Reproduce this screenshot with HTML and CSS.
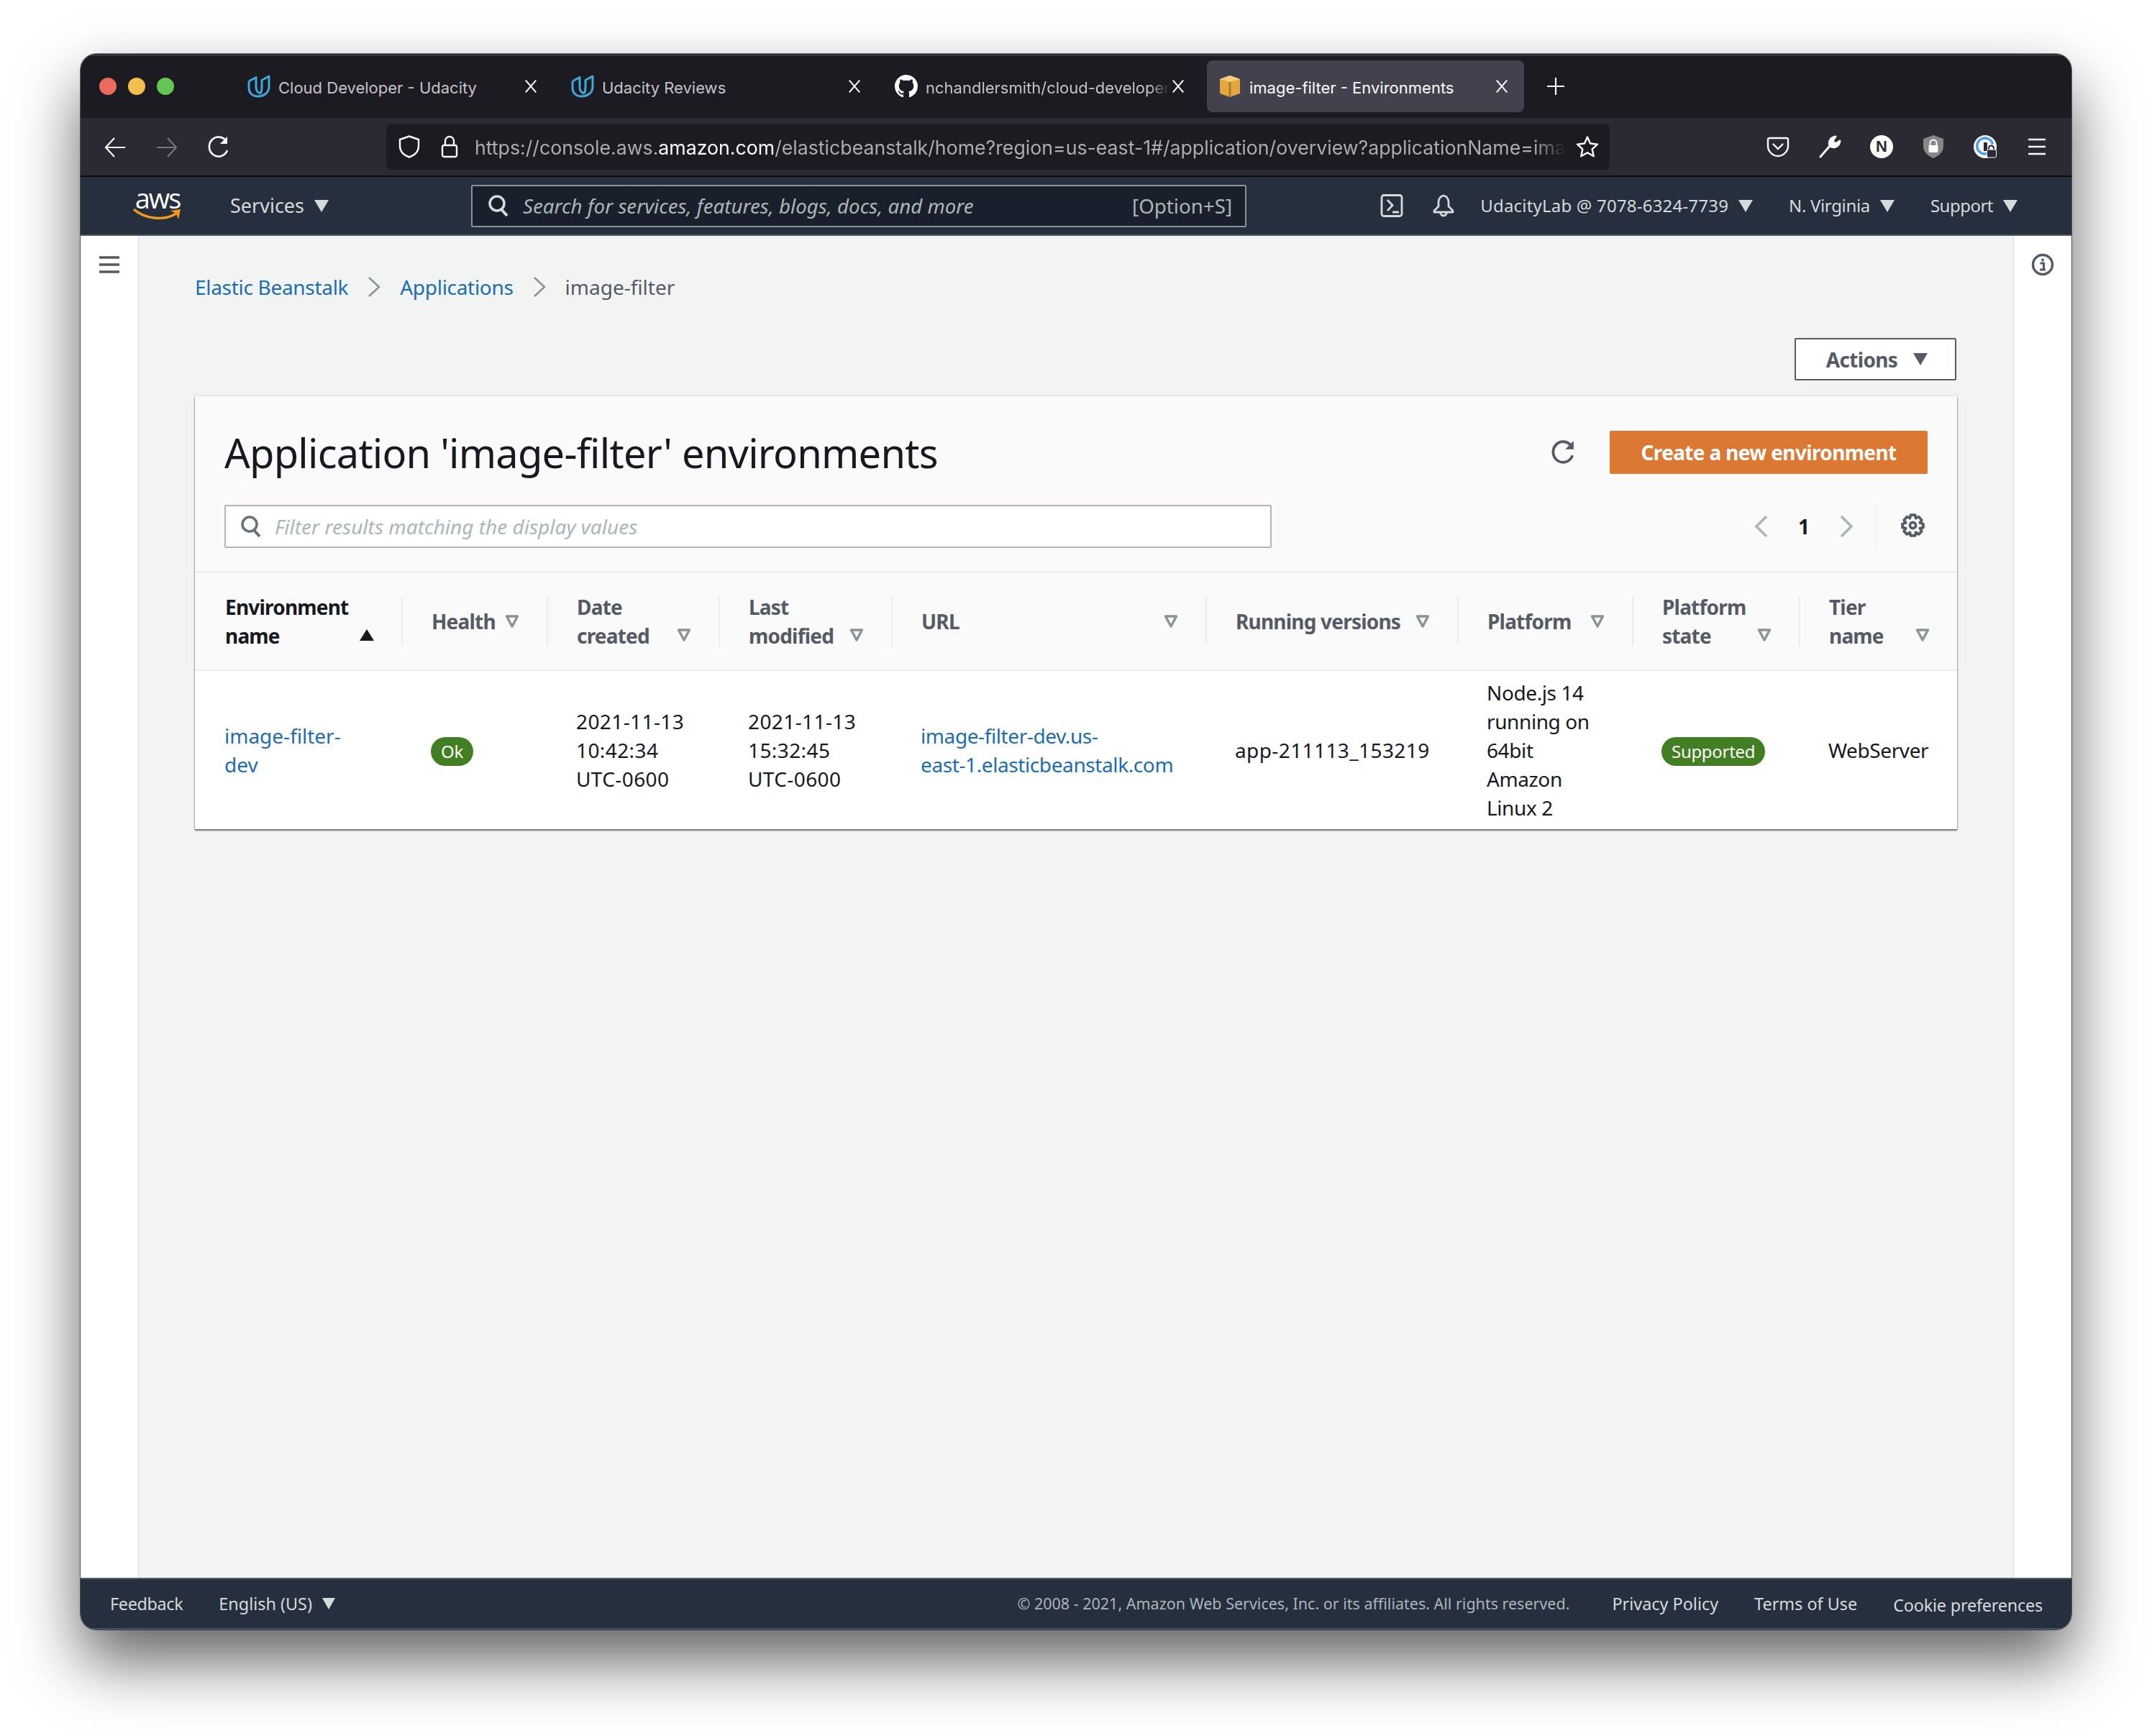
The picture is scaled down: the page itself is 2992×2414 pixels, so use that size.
FILE: index.html
```html
<!DOCTYPE html>
<html lang="en">
<head>
    <meta charset="UTF-8">
    <title>image-filter - Environments</title>
    <link rel="stylesheet" href="styles.css">
</head>
<body>

<svg class="defs" width="0" height="0">
    <symbol id="udacity" viewBox="0 0 32 32">
        <path d="M2 9 L12 3.5 V18 C12 23 15 25 18.5 26 M2 9 V18 C2 26 8 30 14 30 C22 30 30 26 30 16 V2 L20 7.5 V17 C20 21 19.5 23.5 18.5 26" fill="none" stroke="#3fa9dc" stroke-width="3" stroke-linejoin="round"/>
    </symbol>
    <symbol id="close" viewBox="0 0 20 20">
        <path d="M4 3 L16 17 M16 3 L4 17" fill="none" stroke="currentColor" stroke-width="1.7"/>
    </symbol>
    <symbol id="filter-arrow" viewBox="0 0 20 18">
        <path d="M2.5 2 H17.5 L10 16 Z" fill="none" stroke="#879596" stroke-width="3.4" stroke-linejoin="round"/>
    </symbol>
    <symbol id="search" viewBox="0 0 30 32">
        <circle cx="13" cy="13" r="10" fill="none" stroke="currentColor" stroke-width="3.5"/>
        <path d="M19 21 L27 30" fill="none" stroke="currentColor" stroke-width="4"/>
    </symbol>
</svg>

<div class="window">

    <div class="tabbar">
        <div class="traffic">
            <span class="dot dot-red"></span>
            <span class="dot dot-yellow"></span>
            <span class="dot dot-green"></span>
        </div>
        <div class="tab">
            <svg class="favicon"><use href="#udacity"/></svg>
            <span class="tab-title">Cloud Developer - Udacity</span>
            <svg class="tab-close"><use href="#close"/></svg>
        </div>
        <div class="tab">
            <svg class="favicon"><use href="#udacity"/></svg>
            <span class="tab-title">Udacity Reviews</span>
            <svg class="tab-close"><use href="#close"/></svg>
        </div>
        <div class="tab">
            <svg class="favicon" viewBox="0 0 16 16">
                <path fill="#fbfbfe" d="M8 0C3.58 0 0 3.58 0 8c0 3.54 2.29 6.53 5.47 7.59.4.07.55-.17.55-.38 0-.19-.01-.82-.01-1.49-2.01.37-2.53-.49-2.69-.94-.09-.23-.48-.94-.82-1.13-.28-.15-.68-.52-.01-.53.63-.01 1.08.58 1.23.82.72 1.21 1.87.87 2.33.66.07-.52.28-.87.51-1.07-1.78-.2-3.64-.89-3.64-3.95 0-.87.31-1.59.82-2.15-.08-.2-.36-1.02.08-2.12 0 0 .67-.21 2.2.82.64-.18 1.32-.27 2-.27s1.36.09 2 .27c1.53-1.04 2.2-.82 2.2-.82.44 1.1.16 1.92.08 2.12.51.56.82 1.27.82 2.15 0 3.07-1.87 3.75-3.65 3.95.29.25.54.73.54 1.48 0 1.07-.01 1.93-.01 2.2 0 .21.15.46.55.38A8.01 8.01 0 0 0 16 8c0-4.42-3.58-8-8-8z"/>
            </svg>
            <span class="tab-title tab-title-fade">nchandlersmith/cloud-developer</span>
            <svg class="tab-close"><use href="#close"/></svg>
        </div>
        <div class="tab tab-active">
            <svg class="favicon" viewBox="0 0 32 32">
                <path fill="#e3a73f" d="M2 6 L16 1 L30 6 V26 L16 31 L2 26 Z"/>
                <path fill="#f4cf83" d="M2 6 L16 1 L30 6 L16 10 Z"/>
                <path fill="#a97b28" d="M14.5 10 H17.5 V31 H14.5 Z"/>
            </svg>
            <span class="tab-title">image-filter - Environments</span>
            <svg class="tab-close"><use href="#close"/></svg>
        </div>
        <svg class="new-tab" viewBox="0 0 26 26"><path d="M13 1 V25 M1 13 H25" fill="none" stroke="#fbfbfe" stroke-width="2.2"/></svg>
    </div>

    <div class="toolbar">
        <div class="tool tool-nav">
            <svg class="tool-icon" viewBox="0 0 32 32"><path d="M30 16 H3 M15 3 L3 16 L15 29" fill="none" stroke="#fbfbfe" stroke-width="2.2"/></svg>
        </div>
        <div class="tool tool-nav">
            <svg class="tool-icon" viewBox="0 0 32 32"><path d="M2 16 H29 M17 3 L29 16 L17 29" fill="none" stroke="#77767d" stroke-width="2.2"/></svg>
        </div>
        <div class="tool tool-nav">
            <svg class="tool-icon" viewBox="0 0 32 32"><path d="M27 8 A13 13.5 0 1 0 28 20" fill="none" stroke="#fbfbfe" stroke-width="2.6"/><path d="M28 1 V11 H18 Z" fill="#fbfbfe"/></svg>
        </div>
        <div class="urlbar">
            <svg class="url-shield" viewBox="0 0 30 32"><path d="M15 1.5 L28 6 V15 C28 23 22 28 15 30.5 C8 28 2 23 2 15 V6 Z" fill="none" stroke="#fbfbfe" stroke-width="2.4" stroke-linejoin="round"/></svg>
            <svg class="url-lock" viewBox="0 0 24 32"><path d="M6 14 V8 A6 6 0 0 1 18 8 V14" fill="none" stroke="#fbfbfe" stroke-width="2.4"/><rect x="2" y="14" width="20" height="16" rx="2.5" fill="none" stroke="#fbfbfe" stroke-width="2.4"/></svg>
            <span class="url-text">https://console.aws.<b>amazon.com</b>/elasticbeanstalk/home?region=us-east-1#/application/overview?applicationName=ima</span>
            <svg class="url-star" viewBox="0 0 32 32"><path d="M16 2.5 L20 11.5 L30 12.7 L22.7 19.4 L24.7 29.3 L16 24.3 L7.3 29.3 L9.3 19.4 L2 12.7 L12 11.5 Z" fill="none" stroke="#fbfbfe" stroke-width="2.4" stroke-linejoin="round"/></svg>
        </div>
        <div class="tool-group">
            <div class="tool">
                <svg class="tool-icon" viewBox="0 0 32 32"><path d="M4 4 H28 A2 2 0 0 1 30 6 V15 C30 23 23 29 16 29 C9 29 2 23 2 15 V6 A2 2 0 0 1 4 4 Z" fill="none" stroke="#fbfbfe" stroke-width="2.4"/><path d="M9.5 12.5 L16 19 L22.5 12.5" fill="none" stroke="#fbfbfe" stroke-width="2.4" stroke-linecap="round"/></svg>
            </div>
            <div class="tool">
                <svg class="tool-icon" viewBox="0 0 32 32"><path d="M3 30 L16 15 M16 15 C14 9 17 3 24 2 L20 8 L24 12 L30 8 C29 15 23 19 16 15" fill="#fbfbfe" stroke="#fbfbfe" stroke-width="3" stroke-linecap="round" stroke-linejoin="round"/></svg>
            </div>
            <div class="tool">
                <span class="ext-n">N</span>
            </div>
            <div class="tool">
                <svg class="tool-icon" viewBox="0 0 30 32"><path d="M15 0 L29 5 V15 C29 24 22 29 15 32 C8 29 1 24 1 15 V5 Z" fill="#87878a"/><path d="M10.5 14 V11 A4.5 4.5 0 0 1 19.5 11 V14" fill="none" stroke="#fbfbfe" stroke-width="2"/><rect x="8.5" y="14" width="13" height="10" rx="1" fill="#fbfbfe"/></svg>
            </div>
            <div class="tool">
                <svg class="tool-icon" viewBox="0 0 32 32"><circle cx="16" cy="16" r="16" fill="#fbfbfe"/><path d="M25 21 A11 11 0 1 1 26.5 12.5" fill="none" stroke="#4c9cf0" stroke-width="3.5"/><rect x="14" y="10" width="5" height="12" fill="#2b2a33"/><path d="M21 21 V18 A3.5 3.5 0 0 1 28 18 V21" fill="none" stroke="#2b2a33" stroke-width="2"/><rect x="18.5" y="20" width="13" height="11" rx="2" fill="#2b2a33" stroke="#fbfbfe"/></svg>
            </div>
            <div class="tool">
                <svg class="tool-icon" viewBox="0 0 32 32"><path d="M4 6 H28 M4 16 H28 M4 26 H28" fill="none" stroke="#fbfbfe" stroke-width="2.4"/></svg>
            </div>
        </div>
    </div>

    <div class="awsnav">
        <div class="aws-logo">
            <span class="aws-word">aws</span>
            <svg class="aws-smile" viewBox="0 0 68 18"><path d="M1 2 C16 15 42 19 60 8" fill="none" stroke="#f29a1e" stroke-width="3.4"/><path d="M52 4 L66 2 L63 16 L60 8 Z" fill="#f29a1e"/></svg>
        </div>
        <span class="nav-item nav-services">Services<i class="caret"></i></span>
        <div class="nav-search">
            <svg class="nav-search-icon"><use href="#search"/></svg>
            <span class="nav-search-text">Search for services, features, blogs, docs, and more</span>
            <span class="nav-search-key">[Option+S]</span>
        </div>
        <svg class="nav-terminal" viewBox="0 0 32 32"><rect x="2" y="1.5" width="28" height="29" rx="3" fill="none" stroke="#d5dbdb" stroke-width="2.8"/><path d="M10 8 L17 15.5 L10 23 M17 25 H26" fill="none" stroke="#d5dbdb" stroke-width="2.8"/></svg>
        <svg class="nav-bell" viewBox="0 0 32 32"><path d="M16 2 C11 3 9 7 9 12 V17 L3 23 V25 H29 V23 L23 17 V12 C23 7 21 3 16 2 Z" fill="none" stroke="#d5dbdb" stroke-width="2.8" stroke-linejoin="round"/><path d="M11.5 25 A4.5 5 0 0 0 20.5 25" fill="none" stroke="#d5dbdb" stroke-width="2.8"/></svg>
        <span class="nav-item nav-account">UdacityLab @ 7078-6324-7739<i class="caret"></i></span>
        <span class="nav-item nav-region">N. Virginia<i class="caret"></i></span>
        <span class="nav-item nav-support">Support<i class="caret"></i></span>
    </div>

    <div class="main">
        <div class="rail rail-left">
            <svg class="rail-icon" viewBox="0 0 32 32"><path d="M2 6 H30 M2 16 H30 M2 26 H30" fill="none" stroke="#545b64" stroke-width="3.6"/></svg>
        </div>

        <div class="content">
            <div class="breadcrumb">
                <a href="#">Elastic Beanstalk</a>
                <svg class="crumb-sep" viewBox="0 0 18 30"><path d="M2 2 L16 15 L2 28" fill="none" stroke="#879596" stroke-width="2.6"/></svg>
                <a href="#">Applications</a>
                <svg class="crumb-sep" viewBox="0 0 18 30"><path d="M2 2 L16 15 L2 28" fill="none" stroke="#879596" stroke-width="2.6"/></svg>
                <span class="crumb-current">image-filter</span>
            </div>

            <div class="page-actions">
                <button class="btn-actions">Actions<i class="caret caret-dark"></i></button>
            </div>

            <div class="card">
                <div class="card-head">
                    <div class="title-row">
                        <h1>Application 'image-filter' environments</h1>
                        <svg class="refresh" viewBox="0 0 32 32"><path d="M27 8 A13 13.5 0 1 0 28.5 20" fill="none" stroke="#545b64" stroke-width="3.6"/><path d="M30 1 V12 H19 Z" fill="#545b64"/></svg>
                        <button class="btn-primary">Create a new environment</button>
                    </div>
                    <div class="filter-row">
                        <div class="filter-input">
                            <svg class="filter-icon"><use href="#search"/></svg>
                            <span>Filter results matching the display values</span>
                        </div>
                        <div class="pager">
                            <svg class="pager-arrow" viewBox="0 0 20 32"><path d="M17 2 L3 16 L17 30" fill="none" stroke="#aab7b8" stroke-width="3.6"/></svg>
                            <span class="pager-num">1</span>
                            <svg class="pager-arrow" viewBox="0 0 20 32"><path d="M3 2 L17 16 L3 30" fill="none" stroke="#aab7b8" stroke-width="3.6"/></svg>
                        </div>
                        <div class="prefs">
                            <svg class="gear" viewBox="0 0 32 32"><circle cx="16" cy="16" r="4" fill="none" stroke="#545b64" stroke-width="3.4"/><path d="M13 2 H19 L20 6.5 L24 4.5 L28 9 L25.5 12.5 L30 14 V19 L25.5 20 L28 24 L24 28 L20 25.5 L19 30 H13 L12 25.5 L8 28 L4 24 L6.5 20 L2 19 V14 L6.5 12.5 L4 9 L8 4.5 L12 6.5 Z" fill="none" stroke="#545b64" stroke-width="3.6" stroke-linejoin="round"/></svg>
                        </div>
                    </div>
                </div>

                <table class="env-table">
                    <colgroup>
                        <col class="col-name"><col class="col-health"><col class="col-created"><col class="col-modified"><col class="col-url"><col class="col-version"><col class="col-platform"><col class="col-state"><col class="col-tier">
                    </colgroup>
                    <thead>
                        <tr>
                            <th class="first sorted"><div class="th-inner"><span>Environment<br>name</span><svg class="sort-up" viewBox="0 0 20 18"><path d="M10 1 L20 17 H0 Z" fill="#16191f"/></svg></div></th>
                            <th><div class="th-inner one-line"><span>Health</span><svg class="sort-icon"><use href="#filter-arrow"/></svg></div></th>
                            <th><div class="th-inner"><span>Date<br>created</span><svg class="sort-icon"><use href="#filter-arrow"/></svg></div></th>
                            <th><div class="th-inner"><span>Last<br>modified</span><svg class="sort-icon"><use href="#filter-arrow"/></svg></div></th>
                            <th><div class="th-inner one-line"><span>URL</span><svg class="sort-icon"><use href="#filter-arrow"/></svg></div></th>
                            <th><div class="th-inner one-line"><span>Running versions</span><svg class="sort-icon"><use href="#filter-arrow"/></svg></div></th>
                            <th><div class="th-inner one-line"><span>Platform</span><svg class="sort-icon"><use href="#filter-arrow"/></svg></div></th>
                            <th><div class="th-inner"><span>Platform<br>state</span><svg class="sort-icon"><use href="#filter-arrow"/></svg></div></th>
                            <th><div class="th-inner"><span>Tier<br>name</span><svg class="sort-icon"><use href="#filter-arrow"/></svg></div></th>
                        </tr>
                    </thead>
                    <tbody>
                        <tr>
                            <td><a href="#">image-filter-<br>dev</a></td>
                            <td><span class="pill">Ok</span></td>
                            <td class="num">2021-11-13<br>10:42:34<br>UTC-0600</td>
                            <td class="num">2021-11-13<br>15:32:45<br>UTC-0600</td>
                            <td class="txt"><a href="#">image-filter-dev.us-<br>east-1.elasticbeanstalk.com</a></td>
                            <td class="num">app-211113_153219</td>
                            <td class="txt">Node.js 14<br>running on<br>64bit<br>Amazon<br>Linux 2</td>
                            <td><span class="pill">Supported</span></td>
                            <td class="txt">WebServer</td>
                        </tr>
                    </tbody>
                </table>
            </div>
        </div>

        <div class="rail rail-right">
            <svg class="rail-icon" viewBox="0 0 32 32"><circle cx="16" cy="16" r="13.5" fill="none" stroke="#545b64" stroke-width="3.4"/><circle cx="16" cy="9.5" r="2" fill="#545b64"/><path d="M12.5 14 H17.5 V22 M12 23 H20" fill="none" stroke="#545b64" stroke-width="3"/></svg>
        </div>
    </div>

    <div class="footer">
        <span class="foot-feedback">Feedback</span>
        <span class="foot-lang">English (US)<i class="caret"></i></span>
        <span class="foot-copy">© 2008 - 2021, Amazon Web Services, Inc. or its affiliates. All rights reserved.</span>
        <span class="foot-link foot-privacy">Privacy Policy</span>
        <span class="foot-link">Terms of Use</span>
        <span class="foot-link foot-cookie">Cookie preferences</span>
    </div>

</div>

</body>
</html>
```

FILE: styles.css
```css
html, body {
    margin: 0;
    height: 100%;
    background: #fff;
    overflow: hidden;
}
body {
    box-sizing: border-box;
    padding: 75px 112px 0 112px;
    font-family: "Noto Sans", sans-serif;
    font-size: 28px;
    line-height: 40px;
    color: #16191f;
}
.defs {
    display: block;
    height: 0;
}
a {
    color: #1a6db5;
    text-decoration: none;
}
i {
    font-style: normal;
}

.window {
    height: 2191px;
    display: flex;
    flex-direction: column;
    border-radius: 22px;
    overflow: hidden;
    box-shadow: 0 0 0 1px rgba(0, 0, 0, 0.55), 0 44px 88px rgba(0, 0, 0, 0.62);
}

/* browser chrome */
.tabbar {
    flex: none;
    height: 89px;
    box-sizing: border-box;
    padding: 0 0 2px 26px;
    border-top: 3px solid #333338;
    background: #1c1b22;
    display: flex;
    align-items: center;
    font-family: Inter, sans-serif;
    font-size: 22px;
    color: #c4c3c8;
}
.traffic {
    display: flex;
    gap: 16px;
    margin-right: 86px;
}
.dot {
    width: 24px;
    height: 24px;
    border-radius: 50%;
}
.dot-red { background: #ed6a5e; }
.dot-yellow { background: #f5bf4f; }
.dot-green { background: #62c554; }
.tab {
    width: 441px;
    height: 72px;
    box-sizing: border-box;
    margin-right: 9px;
    padding: 0 19px 0 14px;
    display: flex;
    align-items: center;
    border-radius: 8px;
}
.tab-active {
    background: #42414d;
    color: #fbfbfe;
    margin-right: 0;
}
.favicon {
    width: 32px;
    height: 32px;
    flex: none;
    margin: 0 11px 0 2px;
}
.tab-title {
    flex: 1;
    padding-top: 3px;
    white-space: nowrap;
    overflow: hidden;
}
.tab-title-fade {
    -webkit-mask-image: linear-gradient(to right, #000 92%, transparent);
    mask-image: linear-gradient(to right, #000 92%, transparent);
}
.tab-close {
    width: 24px;
    height: 24px;
    flex: none;
    color: #fbfbfe;
}
.new-tab {
    width: 26px;
    height: 26px;
    margin-left: 31px;
}

.toolbar {
    flex: none;
    height: 82px;
    box-sizing: border-box;
    padding-left: 12px;
    background: #2b2a33;
    border-bottom: 2px solid #0c0c0d;
    display: flex;
    align-items: center;
}
.tool {
    width: 72px;
    display: flex;
    justify-content: center;
    align-items: center;
}
.tool-nav {
    padding-top: 2px;
}
.tool-icon {
    width: 32px;
    height: 32px;
}
.urlbar {
    width: 1701px;
    height: 64px;
    margin-left: 197px;
    flex: none;
    box-sizing: border-box;
    padding-left: 17px;
    border-radius: 8px;
    background: #1c1b22;
    display: flex;
    align-items: center;
    font-family: Inter, sans-serif;
    font-size: 26.7px;
    color: #adacb2;
}
.url-shield {
    width: 30px;
    height: 32px;
    flex: none;
}
.url-lock {
    width: 24px;
    height: 32px;
    flex: none;
    margin-left: 29px;
}
.url-text {
    width: 1517px;
    flex: none;
    margin-left: 23px;
    padding-top: 2px;
    white-space: nowrap;
    overflow: hidden;
    -webkit-mask-image: linear-gradient(to right, #000 97%, transparent 100%);
    mask-image: linear-gradient(to right, #000 97%, transparent 100%);
}
.url-text b {
    font-weight: 400;
    color: #fbfbfe;
}
.url-star {
    width: 32px;
    height: 32px;
    flex: none;
    margin-left: 14px;
}
.tool-group {
    display: flex;
    margin-left: 198px;
}
.ext-n {
    width: 32px;
    height: 32px;
    border-radius: 50%;
    background: #fbfbfe;
    color: #2b2a33;
    font-family: "Liberation Sans", sans-serif;
    font-size: 22px;
    font-weight: 700;
    line-height: 32px;
    text-align: center;
}

/* aws console nav */
.awsnav {
    flex: none;
    height: 82px;
    box-sizing: border-box;
    padding: 0 75px 0 73px;
    background: #252f3e;
    border-bottom: 2px solid #545b64;
    display: flex;
    align-items: center;
    font-size: 24px;
    color: #d5dbdb;
}
.aws-logo {
    width: 68px;
    flex: none;
    display: flex;
    flex-direction: column;
    align-items: center;
    margin-top: -4px;
}
.aws-word {
    font-family: "Open Sans", sans-serif;
    font-size: 38px;
    line-height: 28px;
    letter-spacing: -2px;
    color: #fff;
}
.aws-smile {
    width: 68px;
    height: 18px;
}
.nav-item {
    display: flex;
    align-items: center;
    white-space: nowrap;
}
.caret {
    width: 0;
    height: 0;
    margin-left: 14px;
    border-left: 10px solid transparent;
    border-right: 10px solid transparent;
    border-top: 17px solid #d5dbdb;
}
.caret-dark {
    margin-left: 22px;
    border-top-color: #545b64;
}
.nav-services {
    margin-left: 67px;
    font-size: 27px;
}
.nav-search {
    width: 1078px;
    height: 59px;
    box-sizing: border-box;
    margin-left: 198px;
    padding: 0 18px 0 21px;
    flex: none;
    background: #1a202b;
    border: 2px solid #879596;
    border-radius: 2px;
    display: flex;
    align-items: center;
    color: #aab7b8;
    font-size: 27.7px;
}
.nav-search-icon {
    width: 30px;
    height: 32px;
    flex: none;
    color: #d5dbdb;
}
.nav-search-text {
    margin-left: 19px;
    font-style: italic;
    flex: 1;
    white-space: nowrap;
}
.nav-terminal {
    width: 32px;
    height: 32px;
    flex: none;
    margin-left: auto;
}
.nav-bell {
    width: 32px;
    height: 32px;
    flex: none;
    margin-left: 40px;
}
.nav-account {
    margin-left: 35px;
    letter-spacing: 0.2px;
}
.nav-region {
    margin-left: 50px;
    letter-spacing: -0.35px;
}
.nav-support {
    margin-left: 50px;
    letter-spacing: -0.5px;
}

/* page */
.main {
    flex: 1;
    display: flex;
    min-height: 0;
    background: #f2f3f3;
}
.rail {
    flex: none;
    background: #fff;
    display: flex;
    justify-content: center;
    padding-top: 24px;
    box-sizing: border-box;
}
.rail-left {
    width: 81px;
    border-right: 1px solid #d5dbdb;
}
.rail-right {
    width: 81px;
    border-left: 1px solid #d5dbdb;
}
.rail-icon {
    width: 32px;
    height: 32px;
}
.content {
    flex: 1;
    min-width: 0;
    padding: 51px 78px 0;
}
.breadcrumb {
    display: flex;
    align-items: center;
    height: 40px;
    white-space: nowrap;
}
.breadcrumb a {
    letter-spacing: -0.3px;
}
.crumb-sep {
    width: 18px;
    height: 30px;
    margin: 0 27px;
}
.crumb-current {
    color: #545b64;
}
.page-actions {
    display: flex;
    justify-content: flex-end;
    margin-top: 51px;
}
button {
    font-family: "Noto Sans", sans-serif;
    font-size: 28px;
    font-weight: 700;
    line-height: 40px;
    letter-spacing: -0.65px;
}
.btn-actions {
    width: 225px;
    height: 59px;
    margin-right: 1px;
    padding: 0 0 0 4px;
    background: #fff;
    color: #545b64;
    border: 2px solid #545b64;
    border-radius: 2px;
    display: flex;
    align-items: center;
    justify-content: center;
}
.card {
    margin-top: 22px;
    background: #fff;
    box-shadow: 0 2px 2px rgba(0, 28, 36, 0.5), 1px 1px 1px rgba(0, 28, 36, 0.15), -1px 1px 1px rgba(0, 28, 36, 0.15), 0 -1px 2px rgba(0, 28, 36, 0.08);
}
.card-head {
    padding: 48px 41px 32px;
    background: #fafafa;
    border-bottom: 2px solid #eaeded;
}
.title-row {
    display: flex;
    align-items: center;
    height: 60px;
}
h1 {
    margin: 0;
    flex: 1;
    font-size: 56px;
    font-weight: 400;
    line-height: 72px;
    letter-spacing: -0.78px;
    white-space: nowrap;
}
.refresh {
    width: 34px;
    height: 34px;
    margin-right: 48px;
}
.btn-primary {
    width: 442px;
    height: 60px;
    padding: 0;
    background: #dd7833;
    color: #fff;
    border: 0;
    border-radius: 2px;
}
.filter-row {
    display: flex;
    align-items: center;
    height: 60px;
    margin-top: 43px;
}
.filter-input {
    width: 1456px;
    height: 60px;
    box-sizing: border-box;
    padding-left: 20px;
    background: #fff;
    border: 2px solid #aab7b8;
    border-radius: 2px;
    display: flex;
    align-items: center;
    font-style: italic;
    color: #aab7b8;
}
.filter-icon {
    width: 30px;
    height: 32px;
    margin-right: 18px;
    color: #687078;
}
.pager {
    margin-left: auto;
    display: flex;
    align-items: center;
    gap: 34px;
}
.pager-arrow {
    width: 20px;
    height: 32px;
}
.pager-num {
    width: 30px;
    text-align: center;
    font-weight: 700;
}
.prefs {
    height: 60px;
    margin-left: 31px;
    padding: 0 4px 0 34px;
    border-left: 1px solid #eaeded;
    display: flex;
    align-items: center;
}
.gear {
    width: 33px;
    height: 33px;
    margin-bottom: 4px;
}

/* environments table */
.env-table {
    width: 100%;
    table-layout: fixed;
    border-collapse: collapse;
}
.col-name { width: 287px; }
.col-health { width: 202px; }
.col-created { width: 239px; }
.col-modified { width: 240px; }
.col-url { width: 437px; }
.col-version { width: 350px; }
.col-platform { width: 243px; }
.col-state { width: 232px; }
th {
    padding: 28px 38px 27px 42px;
    background: #fafafa linear-gradient(#eaeded, #eaeded) left center / 2px 68px no-repeat;
    border-bottom: 2px solid #eaeded;
    color: #545b64;
    font-weight: 700;
    letter-spacing: -0.8px;
    text-align: left;
}
th.first {
    background: #fafafa;
    color: #16191f;
}
.th-inner {
    display: flex;
    justify-content: space-between;
    align-items: flex-end;
    height: 80px;
}
.one-line {
    align-items: center;
}
.sort-icon, .sort-up {
    width: 20px;
    height: 18px;
    flex: none;
    margin-bottom: 12px;
}
.one-line .sort-icon {
    margin: 0;
}
td {
    height: 220px;
    padding: 0 0 0 41px;
    vertical-align: middle;
    white-space: nowrap;
}
td.num {
    letter-spacing: 0.4px;
}
td.txt {
    letter-spacing: -0.4px;
}
.pill {
    display: inline-block;
    padding: 0 14px;
    border-radius: 20px;
    background: #417f22;
    color: #fff;
    font-size: 24px;
    line-height: 40px;
    letter-spacing: -0.3px;
    vertical-align: middle;
}

.footer {
    flex: none;
    height: 72px;
    box-sizing: border-box;
    padding: 0 40px 0 41px;
    background: #252f3e;
    border-top: 2px solid #545b64;
    border-bottom: 2px solid #4a5361;
    display: flex;
    align-items: center;
    font-size: 23.4px;
    color: #d5dbdb;
}
.foot-feedback {
    letter-spacing: -0.35px;
}
.foot-lang {
    margin-left: 50px;
    display: flex;
    align-items: center;
}
.foot-lang .caret {
    border-left-width: 9px;
    border-right-width: 9px;
    border-top-width: 16px;
}
.foot-copy {
    margin-left: auto;
    font-size: 21.5px;
    color: #aab7b8;
}
.foot-link {
    margin-left: 50px;
}
.foot-privacy {
    margin-left: 59px;
}
.foot-cookie {
    padding-top: 4px;
    letter-spacing: -0.2px;
}
```
